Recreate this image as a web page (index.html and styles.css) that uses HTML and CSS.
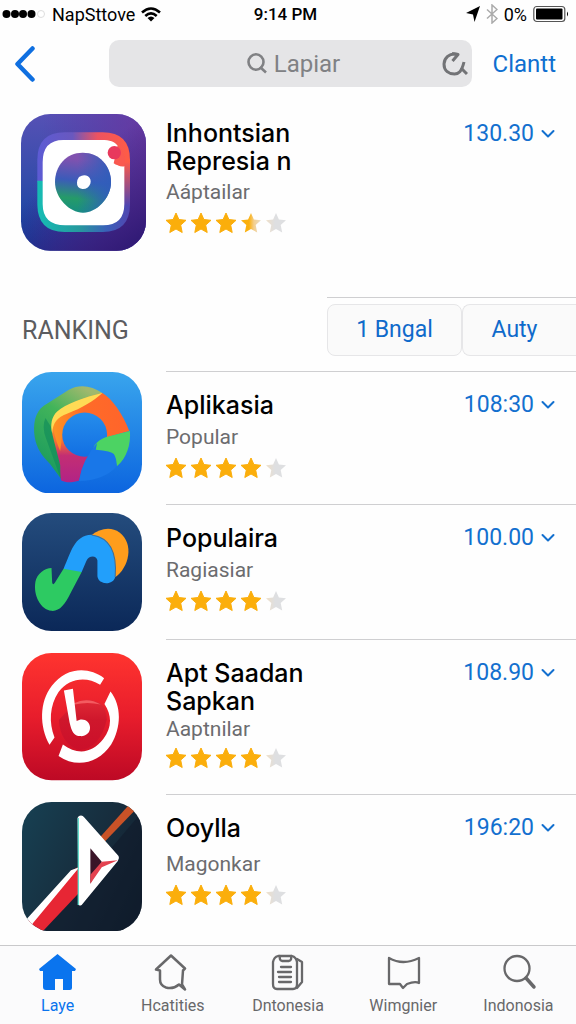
FILE: index.html
```html
<!DOCTYPE html>
<html lang="id">
<head>
<meta charset="utf-8">
<meta name="viewport" content="width=device-width, initial-scale=1">
<title>NapSttove</title>
<link rel="stylesheet" href="styles.css">
</head>
<body>
<svg class="defs" aria-hidden="true">
  <defs>
    <linearGradient id="half"><stop offset=".4" stop-color="#fbb00c"/><stop offset=".65" stop-color="#f3cf90"/><stop offset="1" stop-color="#e8ddc8"/></linearGradient>
    <linearGradient id="faint"><stop offset="0" stop-color="#efdfc8"/><stop offset=".45" stop-color="#dedfe1"/></linearGradient>
    <symbol id="star" viewBox="0 0 22 22"><path d="M11 1l2.900 6.500 7.100.8-5.300 4.800 1.500 7.400L11 17l-6.200 3.500 1.500-7.400L1 8.300l7.100-.8z" stroke-width="1" stroke-linejoin="round"/></symbol>
    <symbol id="chevron" viewBox="0 0 14 10"><path d="M1.500 2l5.500 5.500L12.500 2" fill="none" stroke="currentColor" stroke-width="2" stroke-linecap="round" stroke-linejoin="round"/></symbol>
  </defs>
</svg>

<div class="status">
  <div class="status-side">
    <svg class="signal" viewBox="0 0 44 12" aria-hidden="true"><circle cx="4.500" cy="6" r="4"/><circle cx="13" cy="6" r="4"/><circle cx="21" cy="6" r="4"/><circle cx="29.500" cy="6" r="4"/><circle cx="39" cy="6" r="3.500" fill="#fff" stroke="#ddd"/></svg>
    <span>NapSttove</span>
    <svg class="wifi" viewBox="0 0 20 15" aria-hidden="true"><g fill="none" stroke="#000" stroke-width="2.600"><path d="M1 5.500Q10-2.500 19 5.500"/><path d="M4.300 9Q10 3.800 15.700 9"/></g><path d="M6.500 11Q10 8 13.500 11L10 14.500z"/></svg>
  </div>
  <strong class="clock">9:14 PM</strong>
  <div class="status-side status-right">
    <svg class="arrow" viewBox="0 0 14 16" aria-hidden="true"><path d="M14 0L8.500 16 7 8.500 0 7z"/></svg>
    <svg class="bluetooth" viewBox="0 0 12 20" aria-hidden="true"><path d="M1 5.500l10 9L6 19V1l5 4.500-10 9" fill="none" stroke="#aaa" stroke-width="1.500"/></svg>
    <span>0%</span>
    <svg class="battery" viewBox="0 0 36 18" aria-hidden="true"><rect x=".8" y="1.500" width="31" height="15" rx="3" fill="#fff" stroke="#555" stroke-width="1.200"/><rect x="3" y="3.500" width="26.500" height="11" rx="1"/><path d="M34 6.500q2 2.500 0 5z"/></svg>
  </div>
</div>

<header class="nav">
  <button class="back" aria-label="Kembali"><svg viewBox="0 0 20 36"><path d="M17.500 2.500L2.500 18l15 15.500" fill="none" stroke="#0f6fe0" stroke-width="4.500" stroke-linecap="round" stroke-linejoin="round"/></svg></button>
  <div class="search">
    <label class="search-field">
      <svg viewBox="0 0 20 21" aria-hidden="true"><g fill="none" stroke="#808184" stroke-width="2.600"><ellipse cx="9" cy="9" rx="7.500" ry="7.700"/><path d="M13 14l6 5.500"/></g></svg>
      <input type="text" value="Lapiar" aria-label="Cari">
    </label>
    <button class="reload" aria-label="Muat ulang"><svg viewBox="0 0 26 26"><g fill="none" stroke="#727376" stroke-width="3" stroke-linejoin="round"><path d="M16 3.500C7 1 2 8 2 13c0 7 5 10 10.500 10 4 0 7-2 9.500-12"/><path d="M10 2.500l6 1-5.500 6.500M19 17l6 6"/></g></svg></button>
  </div>
  <a class="nav-link" href="#">Clantt</a>
</header>

<main>
  <article class="app app-hero">
    <svg class="icon" viewBox="33 25 375 410" role="img" aria-label="Inhontsian">
      <defs>
        <linearGradient id="h1" x1="0" y1="0" x2="0" y2="1"><stop stop-color="#5651b5"/><stop offset=".5" stop-color="#334caa"/><stop offset="1" stop-color="#0d409e"/></linearGradient>
        <linearGradient id="h2" x1=".1" y1=".4" x2="1" y2=".6"><stop stop-color="#63309f" stop-opacity="0"/><stop offset="1" stop-color="#6a379f"/></linearGradient>
        <linearGradient id="h5" x1=".4" y1=".4" x2=".8" y2="1"><stop stop-color="#321b77" stop-opacity="0"/><stop offset="1" stop-color="#321b77"/></linearGradient>
        <linearGradient id="h3" x1="0" y1="0" x2="1" y2="0"><stop stop-color="#5c5bd4"/><stop offset=".38" stop-color="#6958bf"/><stop offset=".65" stop-color="#ed5361"/><stop offset="1" stop-color="#ff5c45"/></linearGradient>
        <linearGradient id="h6" x1="0" y1="0" x2="1" y2="0"><stop stop-color="#16bdb4"/><stop offset=".45" stop-color="#26999e"/><stop offset=".75" stop-color="#3a60b9"/><stop offset="1" stop-color="#5145b0"/></linearGradient>
        <linearGradient id="h7" x1="0" y1="0" x2="0" y2="1"><stop stop-color="#fb5a4b"/><stop offset="1" stop-color="#5145b0"/></linearGradient>
        <linearGradient id="h4" x1=".3" y1="0" x2=".2" y2="1"><stop offset=".1" stop-color="#8052af"/><stop offset=".45" stop-color="#3c5bb9"/><stop offset=".75" stop-color="#259b69"/><stop offset="1" stop-color="#168d83"/></linearGradient>
        <linearGradient id="h8"><stop offset=".4" stop-color="#2862bd" stop-opacity="0"/><stop offset="1" stop-color="#315dba"/></linearGradient>
      </defs>
      <rect x="33" y="25" width="375" height="410" rx="88" fill="url(#h1)"/>
      <rect x="33" y="25" width="375" height="410" rx="88" fill="url(#h2)"/>
      <rect x="33" y="25" width="375" height="410" rx="88" fill="url(#h5)"/>
      <path d="M82 228v-65q0-83 82-83h114q82 0 82 83v77z" fill="url(#h3)"/>
      <path d="M82 225l278 5v65q0 84-82 84H164q-82 0-82-84z" fill="url(#h6)"/>
      <path d="M335 170h25v130h-25z" fill="url(#h7)"/>
      <path d="M160 103h115c25 0 38 5 48 17l-12 53q12 9 32 8v114q0 64-64 64H166q-68 0-68-64V170q0-67 62-67z" fill="#fff"/>
      <path d="M322 120q26 18 22 62-20 4-29-17l17-14z" fill="#fa594f"/>
      <circle cx="313" cy="141" r="20" fill="#e8395d"/>
      <path d="M218 141c50 0 85 40 85 88s-43 92-84 92-84-44-84-92 33-88 83-88z" fill="url(#h4)"/>
      <path d="M218 141c50 0 85 40 85 88s-43 92-84 92-84-44-84-92 33-88 83-88z" fill="url(#h8)"/>
      <path d="M207 214q15-10 27-2 11 9 7 22-7 17-24 16-17-3-16-19 0-9 6-17z" fill="#fff"/>
    </svg>
    <div class="info">
      <h1 class="name">Inhontsian<br>Represia n</h1>
      <p class="kind">Aáptailar</p>
      <div class="stars" role="img" aria-label="3,5 dari 5"><svg><use href="#star"/></svg><svg><use href="#star"/></svg><svg><use href="#star"/></svg><svg class="half"><use href="#star"/></svg><svg class="off"><use href="#star"/></svg></div>
    </div>
    <button class="price">130.30<svg><use href="#chevron"/></svg></button>
  </article>

  <section class="ranking">
    <h2>RANKING</h2>
    <div class="filters">
      <button>1 Bngal</button>
      <button>Auty</button>
    </div>
  </section>

  <article class="app app-first">
    <svg class="icon" viewBox="38 20 358 363" role="img" aria-label="Aplikasia">
      <defs>
        <linearGradient id="a1" x1="0" y1="0" x2="0" y2="1"><stop stop-color="#39a5ed"/><stop offset="1" stop-color="#0c65df"/></linearGradient>
        <linearGradient id="a2" x1=".7" y1="0" x2=".2" y2="1"><stop stop-color="#a0b86d"/><stop offset=".35" stop-color="#42b45a"/><stop offset="1" stop-color="#16985e"/></linearGradient>
        <linearGradient id="a3" x1="0" y1="0" x2="0" y2="1"><stop offset=".35" stop-color="#ff9626"/><stop offset=".55" stop-color="#f26b37"/><stop offset=".7" stop-color="#c32e73"/><stop offset="1" stop-color="#b22386"/></linearGradient>
        <linearGradient id="a4" x1="0" y1="0" x2="0" y2="1"><stop stop-color="#268deb"/><stop offset="1" stop-color="#126fe3"/></linearGradient>
        <linearGradient id="a5" x1="0" y1="0" x2="1" y2="0"><stop stop-color="#ff9424"/><stop offset=".4" stop-color="#ff6b28"/><stop offset="1" stop-color="#ff642b"/></linearGradient>
      </defs>
      <rect x="38" y="20" width="358" height="363" rx="88" fill="url(#a1)"/>
      <path d="M278 83C246 60 208 56 178 73L103 121C77 139 70 176 76 215c5 31 20 54 45 79l34 45 10-100z" fill="url(#a2)"/>
      <path d="M108 157q-12 25 2 62l44 120 8-60-34-90z" fill="#118c5a" opacity=".65"/>
      <path d="M278 83C225 95 167 120 143 142c-18 20-20 45-11 78l20 78c0 24 1 40 3 46 16 8 34 6 54 0 5-25 9-48 28-70l40-56-60-30z" fill="url(#a3)"/>
      <path d="M278 83c30 18 60 62 80 113l-72 20-25-40-70-20-33 52-6 48c-14-34-25-70-20-95 8-28 80-43 146-78z" fill="url(#a5)"/>
      <path d="M278 83C225 95 167 116 143 138c-17 16-21 38-15 66 2-32 14-48 46-60 43-16 76-36 104-61z" fill="#ffdb55"/>
      <ellipse cx="225" cy="207" rx="67" ry="66" fill="url(#a4)"/>
      <path d="M290 214l70-18c3 40-9 81-39 105-4-29-28-42-64-45-13-2-3-30 33-42z" fill="#4cd363"/>
      <path d="M262 232q-43 48-54 113 74-1 113-44-2-27-9-36-7-9-54-13z" fill="#1977e8"/>
    </svg>
    <div class="info">
      <h3 class="name">Aplikasia</h3>
      <p class="kind">Popular</p>
      <div class="stars" role="img" aria-label="4 dari 5"><svg><use href="#star"/></svg><svg><use href="#star"/></svg><svg><use href="#star"/></svg><svg><use href="#star"/></svg><svg class="off"><use href="#star"/></svg></div>
    </div>
    <button class="price">108:30<svg><use href="#chevron"/></svg></button>
  </article>

  <article class="app app-second">
    <svg class="icon" viewBox="38 26 358 352" role="img" aria-label="Populaira">
      <defs><linearGradient id="b1" x1="0" y1="0" x2="0" y2="1"><stop stop-color="#244c7d"/><stop offset="1" stop-color="#0b2858"/></linearGradient></defs>
      <rect x="38" y="26" width="358" height="352" rx="88" fill="url(#b1)"/>
      <path d="M244 93c28-23 61-26 85-9 44 34 29 103-13 134z" fill="#ff9d1c"/>
      <path d="M162 192c23-49 30-98 83-101 55 5 76 51 71 125-4 26-50 26-53-1v-47c-3-17-26-15-33 1l-14 33-31 3z" fill="#229ffb"/>
      <path d="M246 92c55 8 76 51 70 125" fill="none" stroke="#456d91" stroke-width="3"/>
      <path d="M162 192l54 10-33 63c-17 35-33 55-57 53-32-4-55-45-48-87 4-23 28-41 48-41l2 43q2 10 8 1z" fill="#2dca62"/>
    </svg>
    <div class="info">
      <h3 class="name">Populaira</h3>
      <p class="kind">Ragiasiar</p>
      <div class="stars" role="img" aria-label="4 dari 5"><svg><use href="#star"/></svg><svg><use href="#star"/></svg><svg><use href="#star"/></svg><svg><use href="#star"/></svg><svg class="off"><use href="#star"/></svg></div>
    </div>
    <button class="price">100.00<svg><use href="#chevron"/></svg></button>
  </article>

  <article class="app app-third">
    <svg class="icon" viewBox="38 23 358 380" role="img" aria-label="Apt Saadan Sapkan">
      <defs>
        <linearGradient id="c1" x1="0" y1="0" x2="0" y2="1"><stop stop-color="#ff342f"/><stop offset=".5" stop-color="#e81d2c"/><stop offset="1" stop-color="#bd0925"/></linearGradient>
        <linearGradient id="c2" x1="0" y1="0" x2="0" y2="1"><stop stop-color="#e02a36"/><stop offset=".4" stop-color="#cf172c"/><stop offset="1" stop-color="#cb0f2a"/></linearGradient>
      </defs>
      <rect x="38" y="23" width="358" height="380" rx="88" fill="url(#c1)"/>
      <path d="M193 174q38-23 80 0 17 16 18 48-20 85-83 91-56-20-60-90z" fill="url(#c2)"/>
      <path d="M193 173q40-20 80 4-40-10-78 0z" fill="#f45b60"/>
      <path d="M283 98C236 62 169 65 127 121c-38 49-37 122-7 176l15-22c-17-45-15-95 12-136 32-40 81-48 124-21z" fill="#fff"/>
      <path d="M302 138c34 43 32 107 2 158-39 58-105 71-157 34l13-34c43 32 87 27 121-17 24-32 27-68 3-104z" fill="#fff"/>
      <path d="M163 135l27-5 11 96c18-12 40 0 40 20 0 16-14 26-28 25-22-1-27-16-33-41z" fill="#fff"/>
    </svg>
    <div class="info">
      <h3 class="name">Apt Saadan<br>Sapkan</h3>
      <p class="kind">Aaptnilar</p>
      <div class="stars" role="img" aria-label="4 dari 5"><svg><use href="#star"/></svg><svg><use href="#star"/></svg><svg><use href="#star"/></svg><svg><use href="#star"/></svg><svg class="off"><use href="#star"/></svg></div>
    </div>
    <button class="price">108.90<svg><use href="#chevron"/></svg></button>
  </article>

  <article class="app app-fourth">
    <svg class="icon" viewBox="38 20 358 386" role="img" aria-label="Ooylla">
      <defs>
        <linearGradient id="d1" x1="0" y1=".2" x2="1" y2=".7"><stop stop-color="#173e50"/><stop offset=".6" stop-color="#172c3c"/><stop offset="1" stop-color="#10202e"/></linearGradient>
        <clipPath id="d2"><rect x="38" y="20" width="358" height="386" rx="88"/></clipPath>
      </defs>
      <g clip-path="url(#d2)">
        <rect x="38" y="20" width="358" height="386" fill="url(#d1)"/>
        <path d="M90 410L396 50V410z" fill="#111b2c" opacity=".6"/>
        <path d="M270 126l86-96 22 12-92 95z" fill="#c85227"/>
        <path d="M50 382l135-157 22-12v79L94 412z" fill="#e72634"/>
        <path d="M46 376l138-152 25-9-138 166-10 16z" fill="#fff"/>
        <path d="M210 61q8-3 14 5l102 115q4 7-2 15L216 327q-8 4-10-2l-2-258q2-4 6-6z" fill="#fff"/>
        <path d="M242 158v106l34-66z" fill="#3b1528"/>
        <path d="M242 237l34-39 48-4-48 21-34 49z" fill="#e44250"/>
        <path d="M206 68v259" stroke="#61ddcd" stroke-width="4"/>
      </g>
    </svg>
    <div class="info">
      <h3 class="name">Ooylla</h3>
      <p class="kind">Magonkar</p>
      <div class="stars" role="img" aria-label="4 dari 5"><svg><use href="#star"/></svg><svg><use href="#star"/></svg><svg><use href="#star"/></svg><svg><use href="#star"/></svg><svg class="off"><use href="#star"/></svg></div>
    </div>
    <button class="price">196:20<svg><use href="#chevron"/></svg></button>
  </article>
</main>

<nav class="tabs">
  <a class="tab active" href="#"><svg viewBox="0 0 38 38"><path d="M18.500 1L37 16l-1 2h-3v17q0 2-2 2h-7V26h-8v11H7q-3 0-3-3V18H1l-1-2z" fill="currentColor"/></svg>Laye</a>
  <a class="tab" href="#"><svg viewBox="0 0 38 38"><path d="M2 16.500L17 2.500l14 13-2 2-1 14 3 5-6-5q-6 5-13 3-6-2-6-8V17.500z" fill="none" stroke="currentColor" stroke-width="2.500" stroke-linejoin="round"/></svg>Hcatities</a>
  <a class="tab" href="#"><svg viewBox="0 0 38 38"><g fill="none" stroke="currentColor" stroke-width="2.300" stroke-linejoin="round" stroke-linecap="round"><path d="M4 9q1-5 5-6h14q4 1 5 6v22q0 5-4 5H8q-4 0-4-5z"/><path d="M11 3q-1 4 2 5h7q3-1 2-5M28 6l5 3v20l-5 6M12 14h10M9 19h13M10 24h12M10 29h12"/></g></svg>Dntonesia</a>
  <a class="tab" href="#"><svg viewBox="0 0 38 38"><path d="M5 5q14 8 30 0v25q-4-2-12 1l-4 4-3-4H5z" fill="none" stroke="currentColor" stroke-width="2.300" stroke-linejoin="round"/></svg>Wimgnier</a>
  <a class="tab" href="#"><svg viewBox="0 0 38 38"><g fill="none" stroke="currentColor"><circle cx="18" cy="15.500" r="12.500" stroke-width="2.300"/><path d="M27 25l8 9" stroke-width="3.500" stroke-linecap="round"/></g></svg>Indonosia</a>
</nav>
</body>
</html>
```
FILE: styles.css
```css
* {
  box-sizing: border-box;
}

body {
  margin: 0;
  min-height: 100vh;
  display: flex;
  flex-direction: column;
  background: #fefefe;
  color: #000;
  font-family: Roboto, "Liberation Sans", sans-serif;
}

h1, h2, h3, p {
  margin: 0;
  font-weight: 400;
}

button, input {
  font: inherit;
  color: inherit;
  background: none;
  border: 0;
  padding: 0;
}

a {
  text-decoration: none;
}

svg {
  display: block;
  flex: none;
}

.defs {
  position: absolute;
  width: 0;
  height: 0;
}

.status {
  display: grid;
  grid-template-columns: 1fr auto 1fr;
  align-items: center;
  height: 28px;
  padding: 0 7px 0 2px;
  font-size: 18px;
}

.status-side {
  display: flex;
  align-items: center;
  gap: 6px;
}

.status-right {
  justify-content: flex-end;
}

.clock {
  font-size: 17px;
  font-weight: 500;
}

.signal {
  width: 44px;
  height: 12px;
}

.wifi {
  width: 20px;
  height: 15px;
}

.arrow {
  width: 14px;
  height: 16px;
}

.bluetooth {
  width: 12px;
  height: 20px;
}

.battery {
  width: 36px;
  height: 18px;
}

.nav {
  display: flex;
  align-items: center;
  padding: 12px 20px 0 15px;
}

.back {
  width: 94px;
}

.back svg {
  width: 20px;
  height: 36px;
}

.search {
  flex: 1;
  display: grid;
  grid-template-columns: 1fr auto 1fr;
  align-items: center;
  height: 47px;
  padding: 0 4px 0 16px;
  border-radius: 10px;
  background: #e5e5e7;
  color: #808184;
  font-size: 24px;
}

.search-field {
  grid-column: 2;
  display: flex;
  align-items: center;
  gap: 7px;
}

.search-field svg {
  width: 20px;
  height: 21px;
}

.search-field input {
  width: 72px;
}

.reload {
  justify-self: end;
}

.reload svg {
  width: 26px;
  height: 26px;
}

.nav-link {
  margin-left: 21px;
  color: #0f6fd0;
  font-size: 24px;
}

main {
  flex: 1;
}

.app {
  display: flex;
  position: relative;
  align-items: flex-start;
  padding: 0 21px 0 22px;
}

.icon {
  width: 120px;
  height: auto;
  margin-right: 24px;
}

.info {
  flex: 1;
  padding-top: 20px;
}

.name {
  font-family: Inter, "Liberation Sans", sans-serif;
  font-size: 25px;
  font-weight: 500;
  line-height: 28px;
}

.kind {
  margin-top: 4px;
  color: #6c6c6f;
  font-size: 21px;
  line-height: 28px;
}

.stars {
  display: flex;
  gap: 3px;
  margin: 6px 0 0 -1px;
}

.stars svg {
  width: 22px;
  height: 22px;
  fill: #fbae0b;
  stroke: #fbae0b;
}

.stars .half {
  fill: url(#half);
  stroke: none;
}

.stars .off {
  fill: url(#faint);
  stroke: none;
}

.price {
  display: flex;
  align-items: center;
  gap: 7px;
  padding-top: 19px;
  color: #1370cf;
  font-size: 23px;
  line-height: 30px;
}

.price svg {
  width: 14px;
  height: 10px;
}

.app-hero {
  padding-top: 27px;
  padding-left: 21px;
}

.app-hero .icon {
  width: 125px;
  margin-right: 20px;
}

.app-hero .info,
.app-hero .price {
  padding-top: 5px;
}

.app-hero .kind {
  margin-top: 3px;
}

.ranking {
  display: flex;
  justify-content: space-between;
  align-items: flex-start;
  margin-top: 46px;
  height: 74px;
}

.ranking h2 {
  padding: 19px 0 0 22px;
  color: #5c5c5f;
  font-size: 25px;
  line-height: 30px;
}

.filters {
  display: grid;
  grid-template-columns: 135fr 114fr;
  width: 249px;
  padding-top: 6px;
  border-top: 1px solid #cfcfd1;
}

.filters button {
  height: 52px;
  border: 1px solid #e6e6e8;
  border-radius: 8px;
  background: #fafafa;
  color: #0f6acb;
  font-size: 23px;
}

.filters button + button {
  padding-right: 10px;
  border-right: 0;
  border-radius: 8px 0 0 8px;
}

/* Hairline that starts at the text column and runs to the right edge */
.app:not(.app-hero)::before {
  content: "";
  position: absolute;
  top: 0;
  left: 166px;
  right: 0;
  height: 1px;
  background: #cfcfd1;
}

.app-first .icon {
  margin-top: 1px;
  margin-bottom: 11px;
}

.app-second .icon {
  margin-top: 9px;
  margin-bottom: 8px;
}

.app-third .icon {
  margin-top: 14px;
  margin-bottom: 13px;
}

.app-third .kind {
  margin-top: 0;
}

.app-third .stars {
  margin-top: 4px;
}

.app-fourth .icon {
  margin-top: 8px;
}

.app-fourth .kind {
  margin-top: 8px;
}

.tabs {
  display: flex;
  padding: 7px 0 7px;
  border-top: 1px solid #c9c9cb;
  background: #fbfbfc;
}

.tab {
  flex: 1;
  display: flex;
  flex-direction: column;
  align-items: center;
  gap: 4px;
  color: #68686a;
  font-size: 16px;
  line-height: 22px;
}

.tab svg {
  width: 38px;
  height: 38px;
}

.tab.active {
  color: #0a74ee;
}
```
